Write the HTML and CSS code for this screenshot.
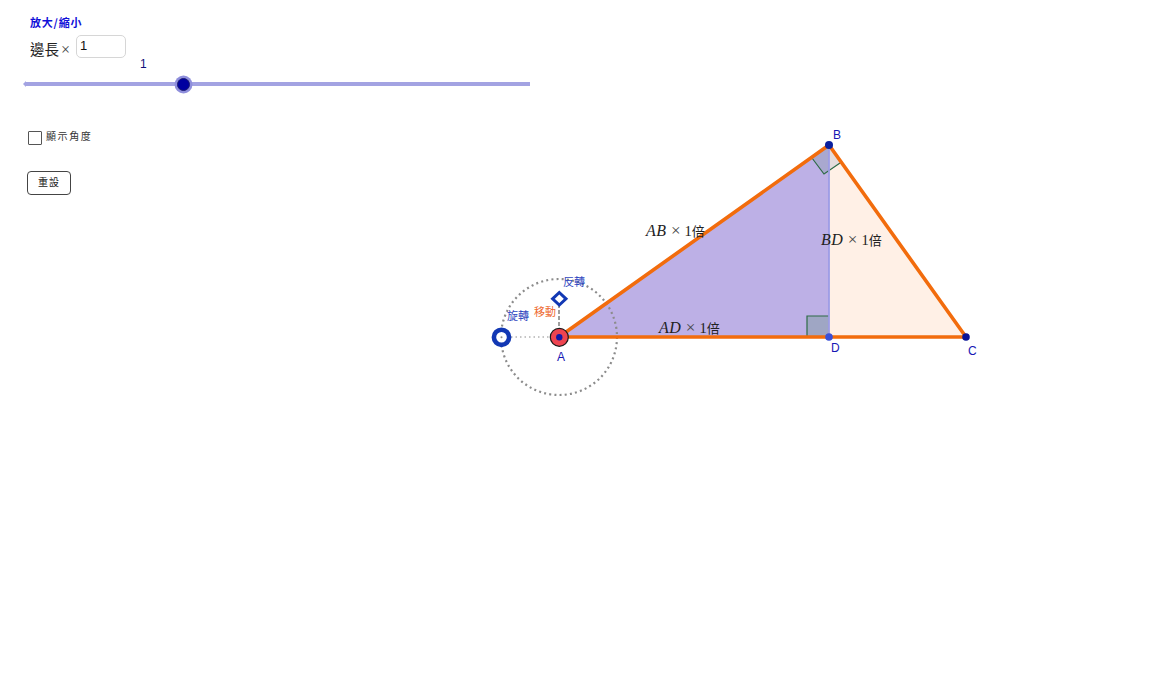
FILE: index.html
```html
<!DOCTYPE html>
<html lang="zh-Hant">
<head>
    <meta charset="UTF-8">
    <meta name="viewport" content="width=device-width, initial-scale=1.0">
    <title>放大/縮小</title>
    <link rel="stylesheet" href="styles.css">
</head>
<body>
    <div class="applet">
        <div class="controls">
            <div class="heading">放大/縮小</div>
            <div class="scale-row">
                <span class="scale-label">邊長<span class="times">×</span></span>
                <input class="scale-input" type="text" value="1">
            </div>
            <div class="slider-value">1</div>
            <div class="slider">
                <div class="slider-tip"></div>
                <div class="slider-knob"></div>
            </div>
            <label class="angle-toggle">
                <span class="checkbox"></span>
                <span class="angle-text">顯示角度</span>
            </label>
            <button class="reset-btn" type="button">重設</button>
        </div>

        <svg class="figure" viewBox="0 0 1172 689" width="1172" height="689">
            <!-- 三角形填色 -->
            <polygon points="559,337 829,145 829,337" fill="#bdb0e6"/>
            <polygon points="829,145 966,337 829,337" fill="#fff0e6"/>

            <!-- 直角記號 -->
            <polygon points="807,316 829,316 829,337 807,337" fill="#9fa6c4"/>
            <polyline points="807,337 807,316 829,316" fill="none" stroke="#2e6b46" stroke-width="1.2"/>
            <polygon points="812,158 824,174 829,171 829,145" fill="#a9a8cf"/>
            <polygon points="829,145 840,163 829,171" fill="#e4dcdc"/>
            <polyline points="812,158 824,174 840,163" fill="none" stroke="#2e6b46" stroke-width="1.2"/>

            <!-- 控制圓 -->
            <circle cx="559" cy="337" r="58" fill="none" stroke="#8c8c8c" stroke-width="2.2" stroke-dasharray="2 3.2"/>
            <line x1="502" y1="337" x2="552" y2="337" stroke="#8c8c8c" stroke-width="1.2" stroke-dasharray="1.5 3"/>
            <line x1="559" y1="304" x2="559" y2="329" stroke="#777" stroke-width="1.4" stroke-dasharray="4 2"/>

            <!-- 邊 -->
            <line x1="829" y1="145" x2="829" y2="337" stroke="#9c9ce6" stroke-width="1.8"/>
            <polygon points="559,337 829,145 966,337" fill="none" stroke="#f26c0d" stroke-width="3.6" stroke-linejoin="round"/>

            <!-- 點 -->
            <circle cx="829" cy="145" r="4" fill="#0a1f9e"/>
            <circle cx="966" cy="337" r="3.8" fill="#0a1496"/>
            <circle cx="829" cy="337" r="3.8" fill="#3a50d8"/>
            <circle cx="559.3" cy="337.3" r="9" fill="#ee4450" stroke="#1a1a1a" stroke-width="1.2"/>
            <circle cx="559.3" cy="337.3" r="3.2" fill="#1018a8"/>
            <circle cx="501.5" cy="337.3" r="7.6" fill="#fff" stroke="#1238b4" stroke-width="4.6"/>
            <circle cx="501.5" cy="337.3" r="1" fill="#8c8c8c"/>
            <polygon points="559.3,292.5 566,298.8 559.3,305 552.6,298.8" fill="#fff" stroke="#1238b4" stroke-width="3"/>

            <!-- 點名 -->
            <text class="point-label" x="833" y="139">B</text>
            <text class="point-label" x="557" y="361">A</text>
            <text class="point-label" x="831" y="352">D</text>
            <text class="point-label" x="968" y="355">C</text>

            <!-- 控制提示 -->
            <text class="hint hint-blue" x="563" y="286">反轉</text>
            <text class="hint hint-blue" x="507" y="320">旋轉</text>
            <text class="hint hint-orange" x="534" y="316">移動</text>

            <!-- 邊長標籤 -->
            <text class="edge-label" x="646" y="236"><tspan class="math">AB</tspan> <tspan class="cross">×</tspan> 1<tspan class="bei">倍</tspan></text>
            <text class="edge-label" x="821" y="245"><tspan class="math">BD</tspan> <tspan class="cross">×</tspan> 1<tspan class="bei">倍</tspan></text>
            <text class="edge-label" x="659" y="333"><tspan class="math">AD</tspan> <tspan class="cross">×</tspan> 1<tspan class="bei">倍</tspan></text>
        </svg>
    </div>
</body>
</html>
```

FILE: styles.css
```css
* {
    margin: 0;
    padding: 0;
    box-sizing: border-box;
}

html, body {
    width: 100%;
    height: 100%;
    overflow: hidden;
    background-color: white;
}

.applet {
    position: relative;
    width: 1172px;
    height: 689px;
    font-family: "Noto Sans CJK TC", "Liberation Sans", sans-serif;
}

.figure {
    position: absolute;
    top: 0;
    left: 0;
}

.controls {
    position: relative;
    z-index: 1;
    display: flex;
    flex-direction: column;
    align-items: flex-start;
    width: 530px;
    padding: 15px 0 0 25px;
}

.heading {
    margin-left: 5px;
    height: 14px;
    line-height: 14px;
    font-size: 11px;
    font-weight: bold;
    letter-spacing: 0.8px;
    color: #1010d8;
}

.scale-row {
    display: flex;
    align-items: flex-start;
    margin: 6px 0 0 5px;
    height: 22px;
}

.scale-label {
    width: 46px;
    padding-top: 5px;
    line-height: 17px;
    font-size: 14.5px;
    color: #222;
    white-space: nowrap;
}

.times {
    margin-left: 2px;
    font-family: "Liberation Serif", serif;
    font-size: 16px;
    color: #444;
}

.scale-input {
    width: 50px;
    height: 23px;
    padding: 0 0 2px 3px;
    border: 1.5px solid #d6d6d6;
    border-radius: 5px;
    font-family: "Liberation Sans", sans-serif;
    font-size: 13px;
    color: #111;
    outline: none;
}

.slider-value {
    margin: 0 0 0 115px;
    height: 14px;
    line-height: 14px;
    font-family: "Liberation Sans", sans-serif;
    font-size: 12px;
    color: #10107a;
}

.slider {
    position: relative;
    width: 505px;
    height: 4px;
    margin-top: 11px;
    background-color: #a3a3e2;
}

.slider-tip {
    position: absolute;
    left: -2px;
    top: -1px;
    width: 0;
    height: 0;
    border-top: 3px solid transparent;
    border-bottom: 3px solid transparent;
    border-right: 3px solid #a3a3e2;
}

.slider-knob {
    position: absolute;
    left: 151.5px;
    top: -4.5px;
    width: 13px;
    height: 13px;
    border-radius: 50%;
    background-color: #0000a0;
    border: 1px solid #1c1c70;
    box-shadow: 0 0 0 2.5px #8f8fdc;
}

.angle-toggle {
    display: flex;
    align-items: center;
    gap: 4px;
    margin: 45px 0 0 3px;
    height: 14px;
    font-size: 10px;
    letter-spacing: 1.6px;
    color: #333;
}

.angle-text {
    margin-top: -5px;
}

.checkbox {
    width: 14px;
    height: 14px;
    border: 1px solid #555;
    border-radius: 1px;
    background-color: white;
}

.reset-btn {
    width: 44px;
    height: 24px;
    margin: 26px 0 0 2px;
    padding-bottom: 4px;
    border: 1.5px solid #444;
    border-radius: 4px;
    background-color: white;
    font-family: inherit;
    font-size: 10px;
    letter-spacing: 1px;
    color: #222;
}

.point-label {
    font-family: "Liberation Sans", sans-serif;
    font-size: 12px;
    fill: #1616b4;
}

.hint {
    font-size: 11px;
}

.hint-blue {
    fill: #3048c0;
}

.hint-orange {
    fill: #ee6a30;
}

.edge-label {
    font-family: "Liberation Serif", "Noto Sans CJK TC", serif;
    font-size: 14.5px;
    word-spacing: 0.5px;
    fill: #222;
}

.math {
    font-size: 16px;
    font-style: italic;
    letter-spacing: 0.6px;
}

.cross {
    font-size: 17px;
    fill: #444;
}

.bei {
    font-size: 13px;
}
```
